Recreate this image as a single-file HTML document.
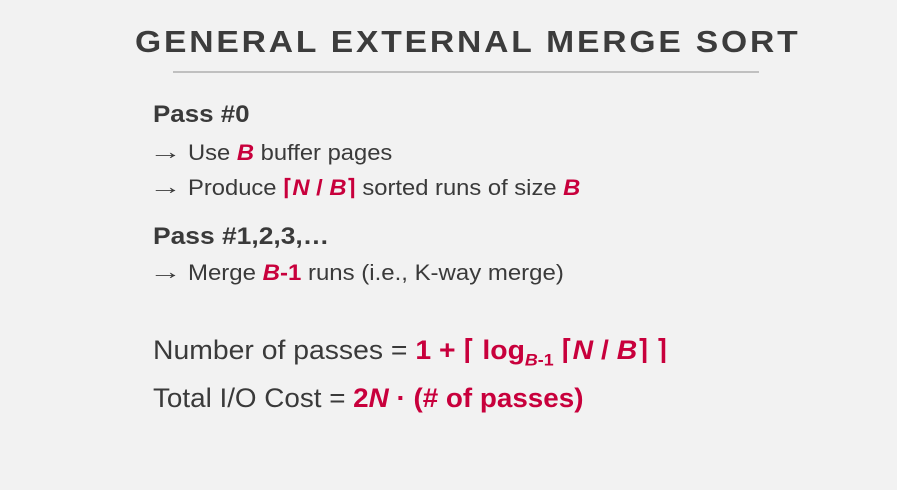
<!DOCTYPE html>
<html><head><style>
body{margin:0;width:897px;height:490px;background:#f2f2f2;font-family:"Liberation Sans",sans-serif;color:#3a3a3a;position:relative;overflow:hidden}
.t{position:absolute;white-space:nowrap;transform-origin:0 0}
.r{color:#c8003c;font-weight:bold}
.i{font-style:italic}
.a{position:absolute;left:149px;font-size:22px;color:#3a3a3a;transform:scaleX(1.5);transform-origin:0 0}
h1{position:absolute;left:135px;top:24px;margin:0;font-size:31px;font-weight:bold;letter-spacing:2.6px;color:#3c3c3c;white-space:nowrap;transform:scaleX(1.085);transform-origin:0 0}
.line{position:absolute;left:173px;top:71px;width:586px;height:2px;background:#c0c0c0}
</style></head><body>
<h1>GENERAL EXTERNAL MERGE SORT</h1>
<div class="line"></div>
<div class="t" style="left:153px;top:101px;font-size:24px;font-weight:bold;transform:scaleX(1.08)">Pass #0</div>
<div class="a" style="top:139px">→</div>
<div class="t" style="left:188px;top:140px;font-size:22px;transform:scaleX(1.08)">Use <span class="r i">B</span> buffer pages</div>
<div class="a" style="top:174px">→</div>
<div class="t" style="left:188px;top:175px;font-size:22px;transform:scaleX(1.08)">Produce <span class="r">⌈<span class="i">N</span> / <span class="i">B</span>⌉</span> sorted runs of size <span class="r i">B</span></div>
<div class="t" style="left:153px;top:223px;font-size:24px;font-weight:bold;transform:scaleX(1.1)">Pass #1,2,3,…</div>
<div class="a" style="top:259px">→</div>
<div class="t" style="left:188px;top:260px;font-size:22px;transform:scaleX(1.09)">Merge <span class="r i">B</span><span class="r">-1</span> runs (i.e., K-way merge)</div>
<div class="t" style="left:153px;top:335px;font-size:27px;transform:scaleX(1.05)">Number of passes = <span class="r">1 + ⌈ log<sub style="font-size:17px"><span class="i">B</span>-1</sub> ⌈<span class="i">N</span> / <span class="i">B</span>⌉ ⌉</span></div>
<div class="t" style="left:153px;top:383px;font-size:27px;transform:scaleX(1.03)">Total I/O Cost = <span class="r">2<span class="i">N</span> · (# of passes)</span></div>
</body></html>
